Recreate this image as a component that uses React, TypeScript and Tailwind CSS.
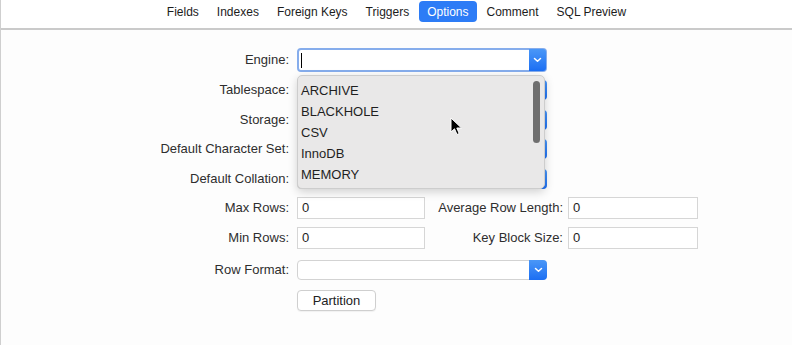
const tabs = ['Fields', 'Indexes', 'Foreign Keys', 'Triggers', 'Options', 'Comment', 'SQL Preview'];
const engines = ['ARCHIVE', 'BLACKHOLE', 'CSV', 'InnoDB', 'MEMORY'];

function Chevron() {
  return (
    <svg width="9" height="6" viewBox="0 0 9 6" fill="none">
      <path d="M1.5 1.5 L4.5 4.3 L7.5 1.5" stroke="white" strokeWidth="1.5" strokeLinecap="round" strokeLinejoin="round" />
    </svg>
  );
}

function Select({ h = 'h-[20px]' }: { h?: string }) {
  return (
    <div className={`flex ${h} w-[250px] rounded-[4px] border border-[#d3d3d3] bg-white`}>
      <div className="flex-1" />
      <div className="-my-px -mr-px flex w-[18px] items-center justify-center rounded-r-[4px] bg-gradient-to-b from-[#4a97f7] to-[#1b6ef3]">
        <Chevron />
      </div>
    </div>
  );
}

function TextBox({ w }: { w: string }) {
  return (
    <div className={`flex h-[22px] ${w} items-center border border-[#d6d6d6] bg-white pl-[4px] text-[13px] text-[#1e1e1e]`}>0</div>
  );
}

function Label({ children }: { children: string }) {
  return <div className="w-[190px] shrink-0 pr-[8px] text-right text-[13px] text-[#2e2e2e]">{children}</div>;
}

export default function App() {
  return (
    <div
      className="relative h-[345px] w-[792px] overflow-hidden border-l border-[#cfcfcf] bg-[#fdfdfd]"
      style={{ fontFamily: '"Liberation Sans", Arial, sans-serif' }}
    >
      <div className="flex h-[30px] justify-center gap-[2px] border-b-2 border-[#cacaca] bg-white pt-px">
        {tabs.map(t => (
          <div
            key={t}
            className={`flex h-[21px] items-center rounded-[4px] px-[8px] text-[12px] ${t === 'Options' ? 'bg-[#2d7cf6] text-white' : 'text-[#1c1c1c]'}`}
          >
            {t}
          </div>
        ))}
      </div>

      <div className="relative ml-[106px] pt-[15px]">
        <div className="flex h-[30px] items-center">
          <Label>Engine:</Label>
          <div className="flex h-[24px] w-[250px] rounded-[4px] border-[2px] border-[#86adec] bg-white">
            <div className="flex flex-1 items-center pl-[2px]">
              <div className="h-[15px] w-px bg-black" />
            </div>
            <div className="-my-[1px] -mr-[1px] flex w-[17px] items-center justify-center rounded-r-[3px] bg-gradient-to-b from-[#4a97f7] to-[#1b6ef3]">
              <Chevron />
            </div>
          </div>
        </div>
        <div className="flex h-[30px] items-center">
          <Label>Tablespace:</Label>
          <Select />
        </div>
        <div className="flex h-[29px] items-center">
          <Label>Storage:</Label>
          <Select />
        </div>
        <div className="flex h-[30px] items-center">
          <Label>Default Character Set:</Label>
          <Select />
        </div>
        <div className="flex h-[29px] items-center">
          <Label>Default Collation:</Label>
          <Select />
        </div>
        <div className="flex h-[29px] items-center">
          <Label>Max Rows:</Label>
          <TextBox w="w-[128px]" />
          <div className="w-[143px] pr-[5px] text-right text-[13px] text-[#2e2e2e]">Average Row Length:</div>
          <TextBox w="w-[130px]" />
        </div>
        <div className="flex h-[32px] items-center">
          <Label>Min Rows:</Label>
          <TextBox w="w-[128px]" />
          <div className="w-[143px] pr-[5px] text-right text-[13px] text-[#2e2e2e]">Key Block Size:</div>
          <TextBox w="w-[130px]" />
        </div>
        <div className="flex h-[32px] items-center">
          <Label>Row Format:</Label>
          <Select />
        </div>
        <div className="flex h-[29px] items-center">
          <div className="w-[190px] shrink-0" />
          <div className="flex h-[21px] w-[79px] items-center justify-center rounded-[4px] border border-[#cfcfcf] bg-white text-[13px] text-[#222] shadow-[0_1px_1px_rgba(0,0,0,0.05)]">
            Partition
          </div>
        </div>

        <div className="absolute left-[190px] top-[45px] h-[114px] w-[248px] rounded-[5px] border border-[#cdcdcd] bg-[#e9e8e8] py-[4px] shadow-[0_3px_10px_rgba(0,0,0,0.18)]">
          {engines.map(e => (
            <div key={e} className="flex h-[21px] items-center pl-[3px] text-[13px] text-[#1f1f1f]">
              {e}
            </div>
          ))}
          <div className="absolute right-[4px] top-[5px] h-[62px] w-[7px] rounded-full bg-[#6f6f6f]" />
        </div>
      </div>

      <svg className="absolute left-[449px] top-[117px]" width="13" height="19" viewBox="0 0 13 19">
        <path d="M1 1 L1 15 L4.5 11.8 L7 17.5 L9.2 16.5 L6.8 11 L11.5 11 Z" fill="black" stroke="white" strokeWidth="1" strokeLinejoin="round" />
      </svg>
    </div>
  );
}
